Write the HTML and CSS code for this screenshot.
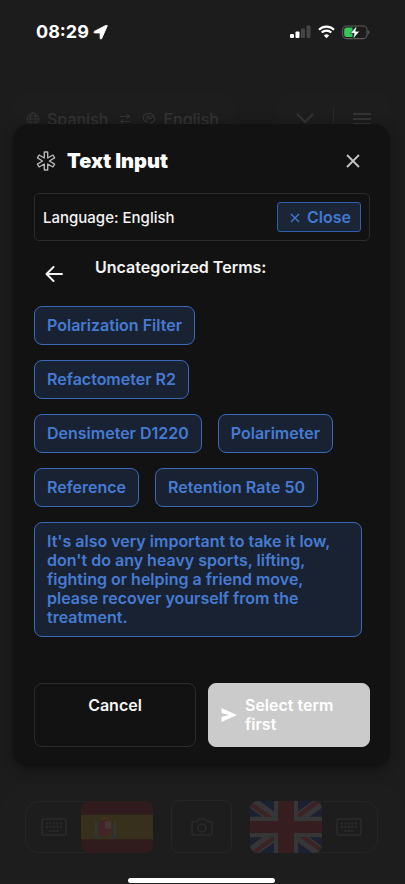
FILE: index.html
```html
<!DOCTYPE html>
<html lang="en">
<head>
<meta charset="utf-8">
<meta name="viewport" content="width=device-width, initial-scale=1">
<title>Text Input</title>
<link rel="stylesheet" href="styles.css">
</head>
<body>
<svg class="defs" width="0" height="0" aria-hidden="true">
  <symbol id="keyboard" viewBox="0 0 26 18">
    <rect x="1" y="1" width="24" height="16" rx="2" fill="none" stroke="currentColor" stroke-width="1.6"/>
    <path d="M5 5.5h16M5 9h16" fill="none" stroke="currentColor" stroke-width="1.8" stroke-dasharray="2 1.5"/>
    <path d="M8 13h10" stroke="currentColor" stroke-width="1.6"/>
  </symbol>
</svg>
<div class="app">
  <header class="status">
    <div class="status-left">
      <span>08:29</span>
      <svg width="15" height="15" viewBox="0 0 15 15"><path d="M14.2.9 8.6 13.6c-.3.8-1.4.6-1.4-.3V7.9H1.7C.8 7.9.6 6.8 1.4 6.4L13.4.2c.6-.2 1 .2.8.7Z" fill="#fff" stroke="#fff" stroke-width="1"/></svg>
    </div>
    <div class="status-right">
      <svg width="21" height="14" viewBox="0 0 21 14">
        <rect x="0" y="9" width="4" height="4" rx="1" fill="#fff"/>
        <rect x="5.5" y="6.500" width="4" height="6.500" rx="1" fill="#fff"/>
        <rect x="11" y="3.500" width="4" height="9.500" rx="1" fill="#454545"/>
        <rect x="16.500" y="0.500" width="4" height="12.500" rx="1" fill="#454545"/>
      </svg>
      <svg width="17" height="14" viewBox="0 0 17 14">
        <path d="M1 4.700a10.700 10.700 0 0 1 15 0M3.700 7.600a6.800 6.800 0 0 1 9.600 0" fill="none" stroke="#fff" stroke-width="2.100"/>
        <path d="M8.500 13.300 5.900 10.500a3.700 3.700 0 0 1 5.200 0Z" fill="#fff"/>
      </svg>
      <svg width="28" height="15" viewBox="0 0 28 15">
        <rect x=".6" y="1" width="24.500" height="12.600" rx="4" fill="none" stroke="#5c5c5c" stroke-width="1.100"/>
        <path d="M5 2.600h5.500v9.400H5a2.800 2.800 0 0 1-2.800-2.800V5.400A2.800 2.800 0 0 1 5 2.600Z" fill="#34c759"/>
        <path d="M26.200 5.300c1.800.7 1.800 3.300 0 4Z" fill="#5c5c5c"/>
        <path d="M15 .6 8.300 8.300h3.900L10.900 14.200 17.700 6.300h-4Z" fill="#fff" stroke="#1c1c1c" stroke-width=".6"/>
      </svg>
    </div>
  </header>

  <nav class="toolbar">
    <div class="languages">
      <svg width="14" height="14" viewBox="0 0 14 14" fill="none" stroke="currentColor"><circle cx="7" cy="7" r="6"/><ellipse cx="7" cy="7" rx="2.700" ry="6"/><path d="M1 7h12M2 4h10M2 10h10"/></svg>
      <span>Spanish</span>
      <svg class="swap" width="12" height="14" viewBox="0 0 14 14" fill="none" stroke="currentColor" stroke-width="1.200"><path d="M1 4h11M9 1l3 3-3 3M13 10H2M5 7l-3 3 3 3"/></svg>
      <svg width="14" height="14" viewBox="0 0 14 14" fill="none" stroke="currentColor" stroke-width="1.200"><path d="M9 12.500V10.500C12 10.500 13 8.500 12.500 6 12 2.500 9 1 6.500 1.300 3 1.300.8 4 1.300 6.500 1.500 9 4 10 6 9.500M4 4.500h3v2h3M7 4.500V3M4 7h2M9 4l2 1"/></svg>
      <span>English</span>
    </div>
    <div class="tools">
      <svg width="18" height="12" viewBox="0 0 18 12" fill="none" stroke="currentColor" stroke-width="2"><path d="m1 1 8 8 8-8"/></svg>
      <i class="divider"></i>
      <svg width="18" height="14" viewBox="0 0 18 14" fill="none" stroke="currentColor" stroke-width="2"><path d="M0 2h18M0 7h18M0 12h18"/></svg>
    </div>
  </nav>

  <footer class="dock">
    <div class="dock-row">
      <div class="speaker">
        <span class="keys"><svg width="26" height="18"><use href="#keyboard"/></svg></span>
        <svg class="flag" viewBox="0 0 72 51" preserveAspectRatio="none">
          <path fill="#301b1d" d="M0 0h72v51H0z"/><path fill="#36301c" d="M0 13.500h72v24H0z"/>
          <path d="M15 20v14M34 20v14" stroke="#363638" stroke-width="2"/><path d="M13 35h5M31 35h5" stroke="#29343a" stroke-width="2"/>
          <path d="M18 21q6-5 12 0v9q-1 5-6 5t-6-5Z" fill="#432528"/><path d="M24 20h6v7h-6z" fill="#493537"/><path d="M20 18q4-3 8 0" stroke="#46331f" stroke-width="2" fill="none"/>
        </svg>
      </div>
      <div class="camera">
        <svg width="22" height="18" viewBox="0 0 22 18" fill="none" stroke="currentColor" stroke-width="1.500"><path d="M3 3.500h3L8 1h6l2 2.500h3q2 0 2 2V15q0 2-2 2H3q-2 0-2-2V5.500q0-2 2-2Z"/><circle cx="11" cy="10" r="4"/></svg>
      </div>
      <div class="speaker">
        <svg class="flag" viewBox="0 0 72 51" preserveAspectRatio="none">
          <path fill="#1c2032" d="M0 0h72v51H0z"/>
          <path d="m0 0 72 51M72 0 0 51" stroke="#363636" stroke-width="11"/>
          <path d="M-2 1 28 22M74 50 44 29M70-1 41 20M2 52 31 31" stroke="#3c2224" stroke-width="4"/>
          <path d="M36 0v51" stroke="#363636" stroke-width="24"/>
          <path d="M0 25.500h72" stroke="#363636" stroke-width="20"/>
          <path d="M36 0v51" stroke="#351d20" stroke-width="16"/>
          <path d="M0 25.500h72" stroke="#351d20" stroke-width="12"/>
        </svg>
        <span class="keys"><svg width="26" height="18"><use href="#keyboard"/></svg></span>
      </div>
    </div>
    <div class="home-bar"></div>
  </footer>
</div>

<div class="overlay">
  <section class="dialog" role="dialog" aria-labelledby="dialog-title">
    <div class="dialog-head">
      <svg width="20" height="20" viewBox="0 0 20 20" fill="none" stroke="#b4b4b4" stroke-width="1.400" stroke-linejoin="round"><path d="M8.300 1h3.400v6L16.900 4l1.700 2.900L13.400 10l5.200 3.100-1.700 2.900-5.200-3v6H8.300v-6L3.100 16l-1.700-2.900L6.600 10 1.400 6.900 3.100 4l5.200 3Z"/></svg>
      <h1 id="dialog-title">Text Input</h1>
      <button class="icon-button" type="button" aria-label="Close dialog">
        <svg width="14" height="14" viewBox="0 0 14 14" stroke="#c4c4c4" stroke-width="1.800"><path d="m1 1 12 12M13 1 1 13"/></svg>
      </button>
    </div>

    <div class="language-bar">
      <span>Language: English</span>
      <button class="close" type="button">
        <svg width="10" height="10" viewBox="0 0 10 10" stroke="currentColor" stroke-width="1.300"><path d="m1 1 8 8M9 1 1 9"/></svg>
        Close
      </button>
    </div>

    <div class="category">
      <button class="back" type="button" aria-label="Back">
        <svg width="18" height="16" viewBox="0 0 18 16" fill="none" stroke="#f2f2f2" stroke-width="2" stroke-linecap="round" stroke-linejoin="round"><path d="M17 8H1.500M8.500 1l-7 7 7 7"/></svg>
      </button>
      <h2>Uncategorized Terms:</h2>
    </div>

    <div class="terms">
      <button class="term" type="button">Polarization Filter</button>
      <button class="term" type="button">Refactometer R2</button>
      <button class="term" type="button">Densimeter D1220</button>
      <button class="term" type="button">Polarimeter</button>
      <button class="term" type="button">Reference</button>
      <button class="term" type="button">Retention Rate 50</button>
      <button class="term" type="button">It's also very important to take it low, don't do any heavy sports, lifting, fighting or helping a friend move, please recover yourself from the treatment.</button>
    </div>

    <div class="actions">
      <button class="cancel" type="button">Cancel</button>
      <button class="submit" type="button">
        <svg width="16" height="14" viewBox="0 0 16 14"><path d="M.5 0 16 7 .5 14V9L8 7 .5 5Z" fill="#fff"/></svg>
        <span>Select term first</span>
      </button>
    </div>
  </section>
</div>
</body>
</html>
```

FILE: styles.css
```css
* { box-sizing: border-box; }

body {
  margin: 0;
  background: #1c1c1c;
  color: #f4f4f4;
  font-family: Inter, "Liberation Sans", sans-serif;
  font-size: 16px;
  line-height: 19px;
}

button {
  margin: 0;
  font: inherit;
  color: inherit;
  background: none;
  border: 0;
  padding: 0;
}

svg { display: block; flex: none; }
.defs { position: absolute; }

.app {
  min-height: 100vh;
  display: flex;
  flex-direction: column;
}

.status {
  display: flex;
  justify-content: space-between;
  align-items: center;
  padding: 22px 35px 0 36px;
}
.status-left {
  display: flex;
  align-items: center;
  gap: 4px;
  color: #fff;
  font-size: 18px;
  font-weight: 700;
  line-height: 20px;
}
.status-right { display: flex; align-items: center; gap: 7px; }

.toolbar {
  display: flex;
  justify-content: space-between;
  margin: 50px 15px 0 13px;
  color: #343434;
}
.languages,
.tools {
  display: flex;
  align-items: center;
  height: 54px;
  border-radius: 12px;
  background: #1d1d1d;
}
.languages { gap: 7px; padding: 0 16px 0 13px; font-weight: 500; }
.swap { margin: 0 4px; }
.tools { gap: 19px; padding: 0 19px; }
.divider { width: 1px; height: 26px; background: #282828; }

.dock {
  margin-top: auto;
  padding: 16px 27px 1px 25px;
  border-radius: 28px 28px 0 0;
  background: #1d1d1d;
  color: #2b2b2b;
}
.dock-row {
  display: flex;
  justify-content: space-between;
  align-items: center;
}
.speaker {
  display: flex;
  border: 1px solid #252525;
  border-radius: 14px;
}
.flag {
  width: 72px;
  height: 52px;
  margin: -1px;
  border-radius: 8px;
}
.keys {
  width: 56px;
  display: flex;
  align-items: center;
  justify-content: center;
}
.camera {
  width: 61px;
  height: 53px;
  display: flex;
  align-items: center;
  justify-content: center;
  border: 1px solid #272727;
  border-radius: 8px;
}
.home-bar {
  width: 147px;
  height: 5px;
  margin: 25px auto 0;
  border-radius: 3px;
  background: #fff;
}

.overlay {
  position: absolute;
  inset: 0;
  padding: 124px 15px 0 13px;
}
.dialog {
  padding: 21px 20px 20px 21px;
  border-radius: 16px;
  background: #121212;
  box-shadow: 0 2px 12px rgba(0, 0, 0, 0.4);
}

.dialog-head {
  display: flex;
  align-items: center;
  padding: 0 3px 0 2px;
}
.dialog-head h1 {
  flex: 1;
  margin: 0 0 0 11px;
  color: #fff;
  font-size: 20px;
  font-weight: 900;
  line-height: 32px;
}
.icon-button { padding: 7px; }

.language-bar {
  display: flex;
  align-items: center;
  justify-content: space-between;
  margin-top: 16px;
  padding: 8px;
  border: 1px solid #2c2c2c;
  border-radius: 5px;
  font-size: 15px;
  font-weight: 500;
}
.close {
  display: flex;
  align-items: center;
  gap: 7px;
  padding: 5px 9px 4px 12px;
  border: 1px solid #2f5fae;
  border-radius: 3px;
  background: #1a2536;
  color: #4379d2;
  font-size: 16px;
  font-weight: 600;
}

.category {
  display: flex;
  margin-top: 13px;
}
.back {
  display: flex;
  align-items: center;
  justify-content: center;
  width: 40px;
  height: 40px;
}
.category h2 {
  margin: 4px 0 0 21px;
  font-size: 16px;
  font-weight: 600;
}

.terms {
  display: flex;
  flex-wrap: wrap;
  gap: 15px 16px;
  margin-top: 12px;
  padding-right: 8px;
}
.term {
  padding: 9px 12px;
  border: 1px solid #3a69b8;
  border-radius: 8px;
  background: #192232;
  color: #467bd3;
  font-weight: 600;
  text-align: left;
}

.actions {
  display: grid;
  grid-template-columns: 1fr 1fr;
  gap: 12px;
  margin-top: 46px;
}
.cancel,
.submit {
  display: flex;
  padding: 12px;
  border: 1px solid #2b2b2b;
  border-radius: 8px;
  font-weight: 600;
}
.cancel { justify-content: center; }
.submit {
  align-items: center;
  gap: 8px;
  border-color: #cbcbcb;
  background: #cbcbcb;
  color: #fff;
  text-align: left;
}
```
